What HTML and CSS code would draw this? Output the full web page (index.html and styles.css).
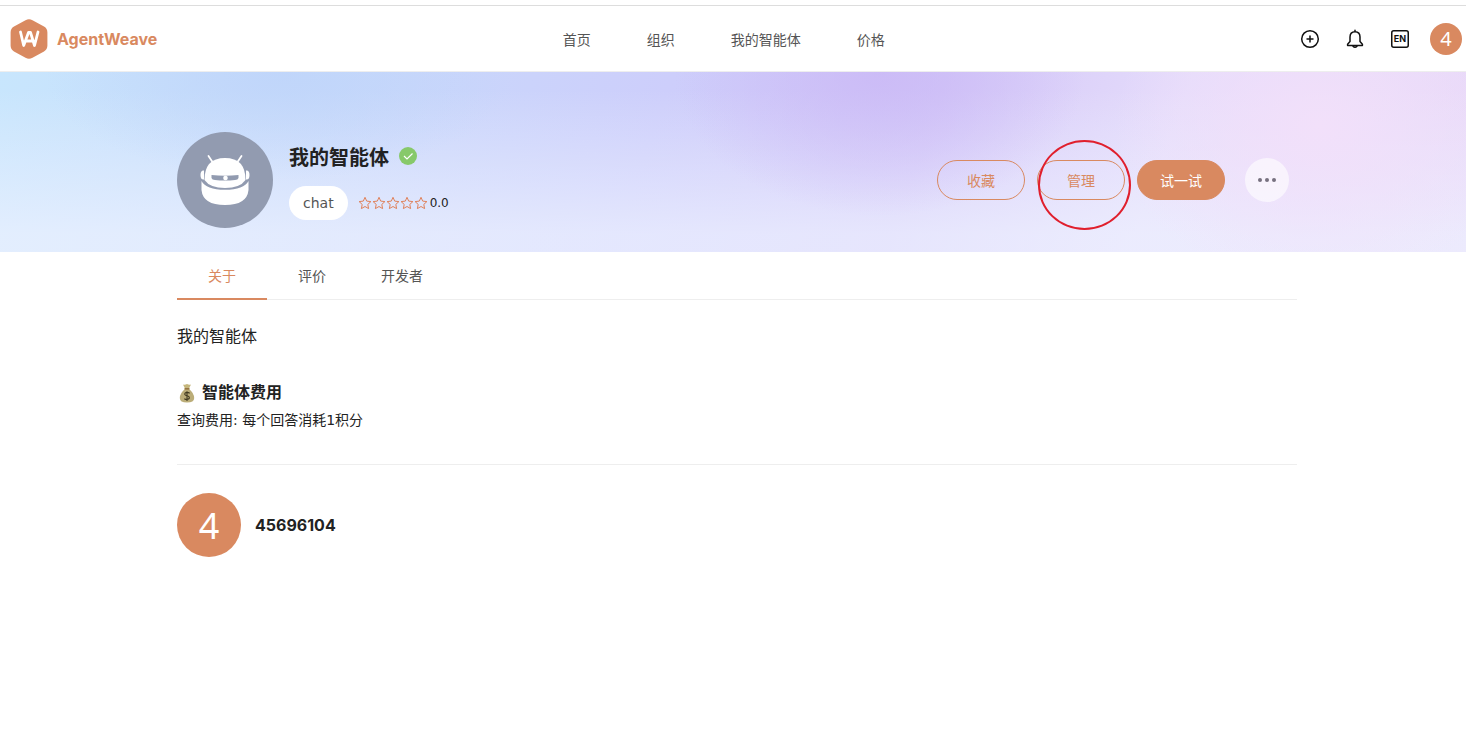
FILE: index.html
```html
<!DOCTYPE html>
<html lang="zh-CN">
<head>
  <meta charset="UTF-8">
  <meta name="viewport" content="width=device-width, initial-scale=1.0">
  <title>AgentWeave</title>
  <link rel="stylesheet" href="styles.css">
</head>
<body>
<header class="header">
  <a class="logo" href="#">
    <svg width="40" height="42" viewBox="0 0 40 42" aria-hidden="true">
      <path d="M16.500 2.200Q20 .2 23.500 2.200L35 8.600Q38.400 10.500 38.400 14.500V27.500Q38.400 31.500 35 33.400L23.500 39.800Q20 41.800 16.500 39.800L5 33.400Q1.600 31.500 1.600 27.500V14.500Q1.600 10.500 5 8.600Z" fill="#d98960"/>
      <path d="M11.500 14L14.700 27.500L19.500 14.500H21.500L25.500 27.500L29 14M17.800 23H23.500" fill="none" stroke="#fff" stroke-width="2.800" stroke-linecap="round" stroke-linejoin="round"/>
    </svg>
    <span>AgentWeave</span>
  </a>
  <nav class="menu">
    <a href="#">首页</a>
    <a href="#">组织</a>
    <a href="#">我的智能体</a>
    <a href="#">价格</a>
  </nav>
  <div class="tools">
    <button class="icon-button" aria-label="新建">
      <svg width="20" height="20" viewBox="0 0 20 20" fill="none" stroke="#111" stroke-width="1.500">
        <circle cx="10" cy="10" r="8.300"/>
        <path d="M10 6.500V13.500M6.500 10H13.500"/>
      </svg>
    </button>
    <button class="icon-button" aria-label="通知">
      <svg width="20" height="20" viewBox="0 0 20 20" fill="none" stroke="#111" stroke-width="1.500" stroke-linejoin="round" stroke-linecap="round">
        <path d="M10 1.300V2.500M5 12.500V8Q5 2.700 10 2.700T15 8V12.500L17.400 15.200V16.500H2.600V15.200ZM8 17.200Q10 19.500 12 17.200"/>
      </svg>
    </button>
    <button class="icon-button" aria-label="切换语言">
      <svg width="20" height="20" viewBox="0 0 20 20">
        <rect x="1.750" y="1.750" width="16.500" height="16.500" rx="2" fill="none" stroke="#111" stroke-width="1.500"/>
        <text class="language" x="10" y="13" text-anchor="middle">EN</text>
      </svg>
    </button>
    <a class="avatar avatar-small" href="#">4</a>
  </div>
</header>

<section class="banner">
  <div class="container agent">
    <svg class="agent-picture" width="96" height="96" viewBox="0 0 96 96" aria-hidden="true">
      <circle cx="48" cy="48" r="48" fill="#929bb0"/>
      <path d="M35.500 30L31.500 24M60.500 30L64.500 24" stroke="#fff" stroke-width="1.800" stroke-linecap="round"/>
      <path d="M27 38.500Q23.500 38 23.500 43T27 47.500ZM69 38.500Q72.500 38 72.500 43T69 47.500Z" fill="#fff"/>
      <path d="M27.500 48Q27.500 26 48 26T68.500 48Q63 56 48 56T27.500 48Z" fill="#fff"/>
      <path d="M24.500 49Q29 57.800 48 57.800T71.500 49V58Q70 73 48 73T24.500 58Z" fill="#fff"/>
      <path d="M34.500 43Q48 44.500 61.500 43V46Q61 48 58 48Q48 49 38 48Q35 48 34.500 46Z" fill="#929bb0"/>
      <circle cx="48.500" cy="46" r="2.300" fill="#fff"/>
    </svg>
    <div class="agent-info">
      <div class="agent-title">
        <h1>我的智能体</h1>
        <svg width="18" height="18" viewBox="0 0 18 18" aria-label="已认证">
          <circle cx="9" cy="9" r="9" fill="#87c96a"/>
          <path d="M5 9L8 12L13.500 6.500" fill="none" stroke="#fff" stroke-width="1.200"/>
        </svg>
      </div>
      <div class="agent-meta">
        <span class="tag">chat</span>
        <div class="rating">
          <svg width="70" height="14" viewBox="0 0 70 14" fill="none" stroke="#e0815a" aria-label="评分">
            <defs><path id="star" d="M7 1.300L8.700 5.100L12.900 5.600L9.800 8.400L10.600 12.600L7 10.500L3.400 12.600L4.200 8.400L1.100 5.600L5.300 5.100Z"/></defs>
            <use href="#star"/>
            <use href="#star" x="14"/>
            <use href="#star" x="28"/>
            <use href="#star" x="42"/>
            <use href="#star" x="56"/>
          </svg>
          <span>0.0</span>
        </div>
      </div>
    </div>
    <div class="actions">
      <button class="button">收藏</button>
      <div class="marked">
        <button class="button">管理</button>
        <span class="marker"></span>
      </div>
      <button class="button button-primary">试一试</button>
      <button class="more" aria-label="更多">
        <svg width="20" height="6" viewBox="0 0 20 6" fill="#77717f">
          <circle cx="3" cy="3" r="2"/>
          <circle cx="10" cy="3" r="2"/>
          <circle cx="17" cy="3" r="2"/>
        </svg>
      </button>
    </div>
  </div>
</section>

<main class="container">
  <nav class="tabs">
    <a class="tab active" href="#">关于</a>
    <a class="tab" href="#">评价</a>
    <a class="tab" href="#">开发者</a>
  </nav>
  <section class="about">
    <p class="description">我的智能体</p>
    <h2>
      <svg width="20" height="20" viewBox="0 0 20 20" aria-hidden="true">
        <path d="M6 1.500Q8 2.200 10 1Q12 2.200 14 1.500L12 5.500H8Z" fill="#c5b67c"/>
        <path d="M8 6H12Q17 10 17.200 15Q17.200 19.500 10 19.500T2.800 15Q3 10 8 6Z" fill="#bbad78"/>
        <path d="M7.500 5.800H12.500" stroke="#8f6a35" stroke-width="1.400"/>
        <path d="M12.700 10.200Q10 8.500 8 10.200Q7 12 10 12.800Q13 13.500 12.200 15.500Q10 17.300 7.300 15.700M10 8.200V18" fill="none" stroke="#40391f" stroke-width="1.100"/>
      </svg>
      <span>智能体费用</span>
    </h2>
    <p class="cost">查询费用: 每个回答消耗1积分</p>
  </section>
  <section class="owner">
    <span class="avatar avatar-large">4</span>
    <strong>45696104</strong>
  </section>
</main>
</body>
</html>
```
FILE: styles.css
```css
* {
  box-sizing: border-box;
}

body {
  margin: 0;
  padding-top: 5px;
  font-family: "DejaVu Sans", "Noto Sans CJK SC", sans-serif;
  font-size: 14px;
  color: #222;
  background-color: #fff;
}

a {
  color: inherit;
  text-decoration: none;
}

button {
  padding: 0;
  font-family: inherit;
  font-size: 14px;
  cursor: pointer;
}

h1,
h2,
p {
  margin: 0;
}

.header {
  display: flex;
  align-items: center;
  justify-content: space-between;
  height: 67px;
  padding: 0 4px 0 9px;
  border-top: 1px solid #ddd;
  border-bottom: 1px solid #eee;
}

.logo {
  display: flex;
  align-items: center;
  gap: 8px;
  font-family: Inter, sans-serif;
  font-size: 16px;
  font-weight: 700;
  color: #d98960;
}

.menu {
  display: flex;
  gap: 56px;
  color: #555;
}

.tools {
  display: flex;
  align-items: center;
  gap: 25px;
  padding-left: 10px;
}

.icon-button {
  display: flex;
  align-items: center;
  justify-content: center;
  width: 20px;
  height: 20px;
  border: none;
  background: none;
}

.tools .avatar {
  margin-left: -5px;
}

.language {
  font-family: Inter, sans-serif;
  font-size: 9px;
  font-weight: 700;
  fill: #111;
}

.avatar {
  display: flex;
  align-items: center;
  justify-content: center;
  border-radius: 50%;
  background-color: #d98960;
  font-family: "Noto Sans", sans-serif;
  color: #fff;
}

.avatar-small {
  width: 32px;
  height: 32px;
  font-size: 20px;
}

.avatar-large {
  width: 64px;
  height: 64px;
  font-size: 36px;
}

.container {
  max-width: 1128px;
  margin: 0 auto;
  padding-left: 8px;
}

.banner {
  padding: 60px 0 24px;
  background:
    radial-gradient(ellipse 14% 80% at 60% 0, rgba(202, 184, 246, 0.8) 0, rgba(202, 184, 246, 0) 100%),
    radial-gradient(ellipse 16% 60% at 19% 0, rgba(190, 212, 250, 0.8) 0, rgba(190, 212, 250, 0) 100%),
    radial-gradient(ellipse 14% 90% at 90% 30%, #f2e0fa 0, rgba(242, 224, 250, 0) 100%),
    linear-gradient(to bottom, rgba(238, 242, 255, 0) 10%, rgba(238, 242, 255, 0.7) 90%),
    linear-gradient(110deg, #c8e6fd 0, #c8dafb 22%, #cdcefb 44%, #d4c8f8 62%, #e5dcfb 78%, #e8d8f8 100%);
}

.agent {
  display: flex;
  gap: 16px;
}

.agent-info {
  padding-top: 8px;
}

.agent-title {
  display: flex;
  align-items: center;
  gap: 10px;
  height: 32px;
}

.agent-title h1 {
  font-size: 20px;
  font-weight: 700;
}

.agent-meta {
  display: flex;
  align-items: center;
  gap: 10px;
  margin-top: 14px;
}

.tag {
  padding: 0 14px;
  border-radius: 17px;
  background-color: #fff;
  line-height: 34px;
  color: #555;
}

.rating {
  display: flex;
  align-items: center;
  gap: 2px;
  font-size: 12px;
}

.actions {
  display: flex;
  align-items: center;
  gap: 12px;
  height: 96px;
  margin-left: auto;
  padding-right: 8px;
}

.button {
  width: 88px;
  height: 40px;
  border: 1px solid #d98960;
  border-radius: 20px;
  background: none;
  color: #d98960;
}

.button-primary {
  background-color: #d98960;
  color: #fff;
}

.marked {
  position: relative;
}

/* Red ring over the manage button */
.marker {
  position: absolute;
  top: -20px;
  left: 1px;
  width: 93px;
  height: 90px;
  border: 2px solid #e01f2d;
  border-radius: 50%;
  pointer-events: none;
}

.more {
  display: flex;
  align-items: center;
  justify-content: center;
  width: 44px;
  height: 44px;
  margin-left: 8px;
  border: none;
  border-radius: 50%;
  background-color: rgba(255, 255, 255, 0.6);
}

.tabs {
  display: flex;
  border-bottom: 1px solid #eee;
}

.tab {
  min-width: 90px;
  height: 48px;
  margin-bottom: -1px;
  border-bottom: 2px solid transparent;
  line-height: 48px;
  text-align: center;
  color: #555;
}

.tab.active {
  border-color: #d98960;
  color: #d98960;
}

.about {
  padding: 25px 0 32px;
  border-bottom: 1px solid #eee;
}

.description {
  font-size: 16px;
  line-height: 24px;
}

.about h2 {
  display: flex;
  align-items: center;
  gap: 5px;
  margin-top: 32px;
  font-size: 16px;
  font-weight: 700;
  line-height: 24px;
}

.cost {
  margin-top: 3px;
  line-height: 24px;
}

.owner {
  display: flex;
  align-items: center;
  gap: 14px;
  padding: 28px 0;
}

.owner strong {
  font-family: Inter, sans-serif;
  font-size: 16px;
}
```
